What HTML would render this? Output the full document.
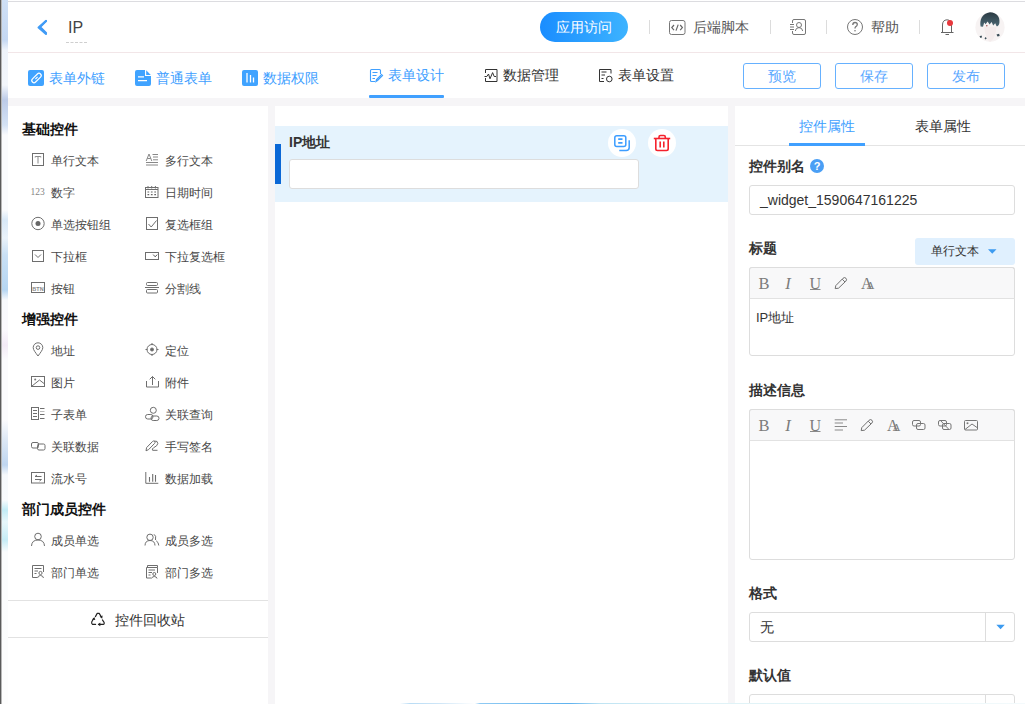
<!DOCTYPE html>
<html><head><meta charset="utf-8">
<style>
*{margin:0;padding:0;box-sizing:border-box}
html,body{width:1025px;height:704px;overflow:hidden;background:#f6f5f7;font-family:"Liberation Sans",sans-serif;color:#333}
.abs{position:absolute}
#edge{left:0;top:0;width:8px;height:704px;background:linear-gradient(#cfe0f6 0,#c5d8f2 40px,#eef3fa 50px,#f3f6fb 85px,#bccbe8 100px,#d4e2f5 125px,#fafbfd 135px,#fafbfd 210px,#d8e8f7 220px,#eaf2fa 238px,#c9e0f5 255px,#b6d6f2 290px,#f7f9fc 300px,#fbf9fd 330px,#f3eaf6 345px,#fbfbfd 360px,#fbfbfd 420px,#dde8f5 440px,#bfd6f0 465px,#f6f9fc 475px,#f9fbfd 500px,#c2ecf6 510px,#e8f7fb 522px,#c6ecf6 540px,#fafcfd 552px,#fdfdfd 704px);}
#edge0{left:0;top:0;width:1px;height:704px;background:#5a5a5a}
#edge1{left:1px;top:0;width:1px;height:704px;background:#b8b8b8}
#header{left:8px;top:0;width:1017px;height:53px;background:#fff;border-top:2px solid #fff}
#topline{left:8px;top:1px;width:1017px;height:1px;background:#dcdce0}
#hline{left:8px;top:52px;width:1017px;height:1px;background:#f2e6e8}
#tabs{left:8px;top:53px;width:1017px;height:45px;background:#fff}
.t{position:absolute;white-space:nowrap;line-height:1}
.blue{color:#40a0ff}
#left{left:8px;top:106px;width:260px;height:598px;background:#fff}
#canvas{left:275px;top:106px;width:453px;height:598px;background:#fff}
#right{left:735px;top:106px;width:290px;height:598px;background:#fff}
.sec{font-size:14px;font-weight:bold;color:#111}
.it{font-size:12px;color:#484848}
.lbl{font-size:14px;font-weight:bold;color:#333}
.box{position:absolute;border:1px solid #dddddd;border-radius:3px;background:#fff}
.btn{position:absolute;top:63px;width:78px;height:26px;border:1px solid #66b1ff;border-radius:3px;color:#5aa8ff;font-size:14px;text-align:center;line-height:24px}
.sep{position:absolute;top:20px;width:1px;height:14px;background:#dcdcdc}
.tb{position:absolute;left:749px;width:266px;height:32px;background:#f8f8f9;border:1px solid #dddddd;border-bottom:1px solid #e2e2e2;border-radius:3px 3px 0 0}
</style></head><body>
<div id="edge" class="abs"></div>
<div id="edge0" class="abs"></div>
<div id="edge1" class="abs"></div>
<div id="header" class="abs"></div>
<div id="topline" class="abs"></div>
<div id="hline" class="abs"></div>
<div id="tabs" class="abs"></div>
<div id="left" class="abs"></div>
<div id="canvas" class="abs"></div>
<div id="right" class="abs"></div>

<!-- HEADER -->
<svg class="abs" style="left:36px;top:19px" width="14" height="16" viewBox="0 0 14 16"><path d="M10 2 L4 8 L10 14" fill="none" stroke="#3d96f5" stroke-width="2.2" stroke-linecap="round" stroke-linejoin="round"/></svg>
<div class="t" style="left:68px;top:20px;font-size:16px;color:#444">IP</div>
<div class="abs" style="left:66px;top:42px;width:21px;border-top:1px dashed #cfcfcf"></div>

<div class="abs" style="left:540px;top:12px;width:88px;height:30px;border-radius:15px;background:linear-gradient(90deg,#1a8dff,#3db3ff);color:#fff;font-size:14px;text-align:center;line-height:30px">应用访问</div>
<div class="sep" style="left:649px"></div>
<div class="t" style="left:693px;top:20px;font-size:14px;color:#555">后端脚本</div>
<div class="sep" style="left:770px"></div>
<div class="sep" style="left:826px"></div>
<div class="t" style="left:871px;top:20px;font-size:14px;color:#555">帮助</div>
<div class="sep" style="left:919px"></div>

<!-- TABS -->
<div class="t blue" style="left:49px;top:71px;font-size:14px">表单外链</div>
<div class="t blue" style="left:156px;top:71px;font-size:14px">普通表单</div>
<div class="t blue" style="left:263px;top:71px;font-size:14px">数据权限</div>
<div class="t blue" style="left:388px;top:68px;font-size:14px">表单设计</div>
<div class="abs" style="left:369px;top:95px;width:75px;height:3px;background:#40a0ff;border-radius:1px"></div>
<div class="t" style="left:503px;top:68px;font-size:14px;color:#333">数据管理</div>
<div class="t" style="left:618px;top:68px;font-size:14px;color:#333">表单设置</div>
<div class="btn" style="left:743px">预览</div>
<div class="btn" style="left:835px">保存</div>
<div class="btn" style="left:927px">发布</div>

<!-- LEFT PANEL -->
<div class="t sec" style="left:22px;top:122px">基础控件</div>
<div class="t it" style="left:51px;top:155px">单行文本</div>
<div class="t it" style="left:165px;top:155px">多行文本</div>
<div class="t it" style="left:51px;top:187px">数字</div>
<div class="t it" style="left:165px;top:187px">日期时间</div>
<div class="t it" style="left:51px;top:219px">单选按钮组</div>
<div class="t it" style="left:165px;top:219px">复选框组</div>
<div class="t it" style="left:51px;top:251px">下拉框</div>
<div class="t it" style="left:165px;top:251px">下拉复选框</div>
<div class="t it" style="left:51px;top:283px">按钮</div>
<div class="t it" style="left:165px;top:283px">分割线</div>
<div class="t sec" style="left:22px;top:312px">增强控件</div>
<div class="t it" style="left:51px;top:345px">地址</div>
<div class="t it" style="left:165px;top:345px">定位</div>
<div class="t it" style="left:51px;top:377px">图片</div>
<div class="t it" style="left:165px;top:377px">附件</div>
<div class="t it" style="left:51px;top:409px">子表单</div>
<div class="t it" style="left:165px;top:409px">关联查询</div>
<div class="t it" style="left:51px;top:441px">关联数据</div>
<div class="t it" style="left:165px;top:441px">手写签名</div>
<div class="t it" style="left:51px;top:473px">流水号</div>
<div class="t it" style="left:165px;top:473px">数据加载</div>
<div class="t sec" style="left:22px;top:502px">部门成员控件</div>
<div class="t it" style="left:51px;top:535px">成员单选</div>
<div class="t it" style="left:165px;top:535px">成员多选</div>
<div class="t it" style="left:51px;top:567px">部门单选</div>
<div class="t it" style="left:165px;top:567px">部门多选</div>
<div class="abs" style="left:8px;top:600px;width:260px;height:1px;background:#e2e2e2"></div>
<div class="t" style="left:115px;top:613px;font-size:14px;color:#333">控件回收站</div>
<div class="abs" style="left:8px;top:637px;width:260px;height:1px;background:#e2e2e2"></div>

<!-- CANVAS -->
<div class="abs" style="left:275px;top:126px;width:453px;height:76px;background:#e5f3fd"></div>
<div class="abs" style="left:275px;top:144px;width:6px;height:40px;background:#0b68d6"></div>
<div class="t lbl" style="left:289px;top:135px">IP地址</div>
<div class="box" style="left:289px;top:159px;width:350px;height:30px"></div>
<div class="abs" style="left:608px;top:129px;width:28px;height:28px;border-radius:50%;background:#fff"></div>
<div class="abs" style="left:648px;top:129px;width:28px;height:28px;border-radius:50%;background:#fff"></div>

<!-- RIGHT PANEL -->
<div class="t blue" style="left:799px;top:119px;font-size:14px">控件属性</div>
<div class="t" style="left:915px;top:119px;font-size:14px;color:#333">表单属性</div>
<div class="abs" style="left:735px;top:145px;width:290px;height:1px;background:#e4e4e4"></div>
<div class="abs" style="left:789px;top:143px;width:76px;height:3px;background:#40a0ff"></div>
<div class="t lbl" style="left:749px;top:159px">控件别名</div>
<div class="abs" style="left:810px;top:159px;width:14px;height:14px;border-radius:50%;background:#4a9ff5;color:#fff;font-size:11px;font-weight:bold;text-align:center;line-height:14px">?</div>
<div class="box" style="left:749px;top:185px;width:266px;height:30px"></div>
<div class="t" style="left:760px;top:193px;font-size:14px;color:#333">_widget_1590647161225</div>
<div class="t lbl" style="left:749px;top:241px">标题</div>
<div class="abs" style="left:915px;top:238px;width:100px;height:27px;background:#e0f0fe;border-radius:3px"></div>
<div class="t" style="left:931px;top:245px;font-size:12px;color:#333">单行文本</div>
<div class="box" style="left:749px;top:267px;width:266px;height:89px"></div>
<div class="tb" style="top:267px"></div>
<div class="t" style="left:756px;top:311px;font-size:13px;color:#333">IP地址</div>
<div class="t lbl" style="left:749px;top:383px">描述信息</div>
<div class="box" style="left:749px;top:409px;width:266px;height:151px"></div>
<div class="tb" style="top:409px;height:32px"></div>
<div class="t lbl" style="left:749px;top:586px">格式</div>
<div class="box" style="left:749px;top:612px;width:266px;height:30px"></div>
<div class="abs" style="left:985px;top:613px;width:1px;height:28px;background:#dddddd"></div>
<div class="t" style="left:760px;top:620px;font-size:14px;color:#333">无</div>
<div class="t lbl" style="left:749px;top:668px">默认值</div>
<div class="box" style="left:749px;top:694px;width:266px;height:30px"></div>
<div class="abs" style="left:985px;top:695px;width:1px;height:28px;background:#dddddd"></div>

<svg class="abs" style="left:0;top:0" width="1025" height="704" viewBox="0 0 1025 704">
<g fill="none" stroke="#7a7a7a" stroke-width="1">
<!-- header icons -->
<rect x="669.5" y="20.5" width="15.5" height="14" rx="2" stroke="#777"/>
<path d="M674 25 L671.8 27.6 L674 30.2 M680.2 25 L682.4 27.6 L680.2 30.2 M678.2 24.6 L676 30.6" stroke="#666" stroke-width="1.2"/>
<path d="M792.5 23 V21 Q792.5 19.5 794 19.5 H804 Q805.5 19.5 805.5 21 V33 Q805.5 34.5 804 34.5 H794 Q792.5 34.5 792.5 33 V31" stroke="#777"/>
<path d="M790 24.5 H794 M790 27 H794 M790 29.5 H794" stroke="#777"/>
<circle cx="799" cy="25" r="2.5" stroke="#777"/>
<path d="M795.3 31 Q795.8 27.6 799 27.6 Q802.2 27.6 802.7 31" stroke="#777"/>
<circle cx="855" cy="27" r="7.5" stroke="#777"/>
<path d="M852.8 25 Q852.8 22.5 855 22.5 Q857.3 22.5 857.3 24.6 Q857.3 26 855.6 26.8 Q855 27.2 855 28.6" stroke="#777" stroke-width="1.3"/>
<circle cx="855" cy="30.8" r="0.8" fill="#777" stroke="none"/>
<path d="M941 32.5 H953.5 M942.5 32.5 V25 Q942.5 20 947 19.8 Q951.5 20 951.5 25 V32.5 M945.5 34.5 H949" stroke="#666"/>
<circle cx="950" cy="23" r="3" fill="#e8383d" stroke="none"/>
<!-- back arrow -->
<path d="M46 21 L38.5 27.5 L46 34" stroke="#409cf6" stroke-width="2" stroke-linecap="round" stroke-linejoin="round"/>
</g>
<!-- avatar -->
<defs><linearGradient id="hair" x1="0" y1="0" x2="0" y2="1"><stop offset="0" stop-color="#2a3a43"/><stop offset="1" stop-color="#4d6a76"/></linearGradient></defs>
<circle cx="990" cy="27.2" r="14.6" fill="#f7f3f3"/>
<path d="M984 27 Q986 40 990 42 Q995 40 996.5 27 Z" fill="#f4ecec"/>
<path d="M980.6 26.5 C979.5 20 982 13.3 990 12.3 C997 12.5 1000.2 17 999.4 23 C999 25.5 997.8 26.3 996.6 26.3 L995.2 23.2 L993.2 25.6 L991.6 22 L989.6 24.6 L987.6 21.6 L985.6 24.2 L984.2 22.6 L983 26.8 Z" fill="url(#hair)"/>
<circle cx="986.8" cy="25.7" r="0.8" fill="#a05050"/>
<path d="M979.5 36.3 l2 -0.8 l0.6 1.8 l-1.6 0.8 z M984.5 38.2 l1.3 -1.2 l0.9 1.6 l-1.2 1 z M996.5 34.6 l2.6 -0.8 l0.6 2.2 l-2.2 0.6 z" fill="#3a4c56"/>
<!-- tab icons -->
<rect x="28" y="70" width="16" height="16" rx="2" fill="#40a3ff"/>
<g transform="rotate(-45 36.5 78)" fill="none" stroke="#fff" stroke-width="1.2"><rect x="30.8" y="75.8" width="11.4" height="4.4" rx="2.2"/><path d="M35 78 H38"/></g>
<path d="M137 70 H145 V76 H151 V84 Q151 86 149 86 H137 Q135 86 135 84 V72 Q135 70 137 70 Z" fill="#40a3ff"/>
<path d="M146.2 70.3 L150.8 74.9 H146.2 Z" fill="#40a3ff"/>
<path d="M138 76.8 H144 M138 80.6 H147" stroke="#fff" stroke-width="1.2" fill="none"/>
<rect x="242" y="70" width="16" height="16" rx="2" fill="#40a3ff"/>
<path d="M247 73 V82.5 M250.5 75 V82.5 M253.5 77.5 V82.5" stroke="#fff" stroke-width="1.3" fill="none"/>
<g fill="none" stroke="#40a0ff" stroke-width="1.1">
<path d="M380.5 74 V70.5 Q380.5 69.5 379.5 69.5 H371.5 Q370.5 69.5 370.5 70.5 V80.5 Q370.5 81.5 371.5 81.5 H375"/>
<path d="M372.5 72.5 H377.5 M372.5 75.5 H376.5 M372.5 78.5 H375"/>
<path d="M376 81.5 L376.5 79.5 L381.5 74.5 L382.5 75.5 L377.5 80.5 Z" stroke-width="1.2"/>
</g>
<g fill="none" stroke="#333" stroke-width="1">
<path d="M485.5 73 V69.5 H497 V81.5 H485.5 V78"/>
<path d="M484.5 76.5 H486.8 L488.5 74 L490 78.8 L492.6 72.6 L494.2 76.5 H496"/>
<path d="M604 81.5 H599.5 V69.5 H611 V73.5"/>
<path d="M601.5 72 H606.5 M601.5 75 H605 M601.5 78.5 H603.5"/>
<circle cx="609.3" cy="79" r="2.8"/>
</g>
<!-- left panel icons -->
<g fill="none" stroke="#6e6e6e" stroke-width="1">
<rect x="32.5" y="153.5" width="11" height="12"/>
<path d="M35.2 157.5 V156.5 H40.8 V157.5 M38 156.5 V163.5" stroke="#8a8a8a"/>
<circle cx="38" cy="223.5" r="6.2"/>
<rect x="32.5" y="250.5" width="11" height="11"/>
<path d="M35 254.5 L38 257.5 L41 254.5"/>
<rect x="31.5" y="282.5" width="13" height="10"/>
<path d="M146.2 161 L149 154 L151.8 161 M147.3 158.5 H150.7 M152.5 154.5 H158 M153 157 H158 M153 159.8 H158 M146 162.5 H158 M146 165 H158" stroke="#888"/>
<rect x="145.5" y="187.5" width="12.5" height="10"/>
<path d="M145.5 189.5 H158 M148 186 V188.5 M151.7 186 V188.5 M155.4 186 V188.5"/>
<path d="M147.5 192 H149.2 M150.9 192 H152.6 M154.3 192 H156 M147.5 194.7 H149.2 M150.9 194.7 H152.6 M154.3 194.7 H156" stroke="#666" stroke-width="1.2"/>
<rect x="146.5" y="217.5" width="11" height="12"/>
<path d="M148.5 224 L151.2 227 L156.5 220.5"/>
<rect x="145.5" y="252.5" width="13" height="7"/>
<path d="M153.2 254.6 L155.2 256.8 L157.2 254.6" stroke="#555"/>
<rect x="146.5" y="282.5" width="11" height="3" rx="1"/>
<path d="M145 287.5 H159"/>
<rect x="146.5" y="289.5" width="11" height="3.5" rx="1"/>
<path d="M38 356 C35.5 352.5 33.2 350 33.2 347.6 A4.8 4.8 0 0 1 42.8 347.6 C42.8 350 40.5 352.5 38 356 Z"/>
<circle cx="38" cy="347.6" r="1.8"/>
<rect x="31.5" y="376.5" width="13" height="10"/>
<path d="M32 386 L39.5 380 L44 383.5"/>
<rect x="31.5" y="407.5" width="7" height="12"/>
<path d="M33 410.5 H37 M33 413.5 H37 M33 416.5 H37 M40 408.5 H44.5 M40 414.5 H44.5 M40 418.5 H44.5"/>
<path d="M40 411.5 H44.5" stroke="#bbb"/>
<rect x="31.5" y="442.5" width="7" height="5.5" rx="1.5"/>
<rect x="37.5" y="444" width="7.5" height="6" rx="1.5"/>
<rect x="31.5" y="472.5" width="13" height="10.5"/>
<path d="M35 476.5 H41.5 M35 476.5 L37 475 M35 479.5 H41.5 M41.5 479.5 L39.5 481"/>
<circle cx="152" cy="349.5" r="5"/>
<path d="M152 343 V345 M152 354 V356 M145.5 349.5 H147.5 M156.5 349.5 H158.5"/>
<circle cx="152" cy="349.5" r="1.5" fill="#666"/>
<path d="M146.5 381 V387 H158.5 V381 M152.5 385 V376.5 M149.7 379.3 L152.5 376.5 L155.3 379.3"/>
<circle cx="153.3" cy="410.3" r="3"/>
<rect x="145.5" y="414.5" width="7.5" height="4.5" rx="2.2"/>
<rect x="151" y="416" width="8" height="4.5" rx="2.2"/>
<path d="M146 450.8 L146.6 447.6 L152.6 441.4 Q153.6 440.5 154.6 441.4 Q155.6 442.4 154.6 443.4 L148.6 449.6 Z M154.2 441 Q158 440.6 157.8 443.6 Q157.4 446 153.5 447.8 Q151.6 449 152.6 450.3 H157.5"/>
<path d="M145.8 472 V483.3 H158.3"/><path d="M149.5 477 V481.8 M152.7 474 V481.8 M155.5 475 V481.8" stroke-width="1.1"/>
<circle cx="38" cy="536.5" r="3.3"/>
<path d="M31.5 546 Q31.8 540 38 540 Q44.2 540 44.5 546"/>
<path d="M43.5 565.5 H32.5 V577.5 H37 M43.5 565.5 V572 M34.5 568.5 H41.5 M34.5 571 H38 M34.5 573.5 H36.5"/>
<circle cx="40.5" cy="573" r="1.6"/>
<path d="M37.5 578 Q38 575.5 40.5 575.5 Q43 575.5 43.5 578"/>
<circle cx="150" cy="537.3" r="3.2"/>
<path d="M145 545.5 Q145.2 540.5 150 540.5 Q154.8 540.5 155 545.5 M154 534.3 Q156.5 535.5 155.5 540 M156.2 540.8 Q158.5 542 158.8 545.5"/>
<path d="M147.5 567.5 V565.5 H157.5 V567.5 M146.5 567.5 V578 H151 M146.5 567.5 H157.5 V573 M148.5 570 H155 M148.5 572.5 H152 M148.5 575 H150.5"/>
<circle cx="154.3" cy="574" r="1.5"/>
<path d="M151.5 578.5 Q152 576.5 154.3 576.5 Q156.6 576.5 157 578.5"/>
</g>
<circle cx="38" cy="223.5" r="2.5" fill="#666"/>
<text x="38" y="290.6" font-family="Liberation Sans" font-size="5.5" font-weight="bold" fill="#888" text-anchor="middle">BTN</text>
<text x="30.5" y="195" font-family="Liberation Serif" font-size="9.5" fill="#858585">123</text>
<circle cx="35.2" cy="379.5" r="1" fill="#777"/>
<!-- recycle -->
<g fill="none" stroke="#222" stroke-width="1.15" stroke-linejoin="round" stroke-linecap="round">
<path d="M95.4 616.6 L97.2 613.4 H99.2 L101 616.4"/>
<path d="M93.6 618.6 L91.8 621.8 Q91.2 623.4 92.4 624.4 H95.6"/>
<path d="M98.6 624.4 H103.2 Q104.6 624.2 104.1 622.4 L102.4 619.9"/>
</g>
<g fill="#222">
<path d="M99.6 616.8 L102.6 615.6 L102.2 618.8 Z"/>
<path d="M92.2 619.6 L94.4 616.9 L95.3 620 Z"/>
<path d="M97.7 624.4 L100.3 622.5 V626.3 Z"/>
</g>
<!-- canvas action icons -->
<g fill="none" stroke="#3d9dff" stroke-width="1.5">
<rect x="614.8" y="135.8" width="11" height="10.7" rx="2"/>
<path d="M618.2 139.2 H622.5 M618.2 142.8 H622.5" stroke-width="1.8"/>
<path d="M629.2 140.2 V147.6 Q629.2 150.6 626.2 150.6 H619.3"/>
</g>
<g fill="none" stroke="#f5222d" stroke-width="1.6">
<path d="M653.8 138.5 H670.2"/>
<path d="M659 138.3 V137 Q659 135.5 660.5 135.5 H663.8 Q665.3 135.5 665.3 137 V138.3"/>
<path d="M655.8 139 V148.8 Q655.8 150.5 657.5 150.5 H666.5 Q668.2 150.5 668.2 148.8 V139"/>
<path d="M660.2 141.5 V147.5 M663.8 141.5 V147.5"/>
</g>
<!-- right panel -->
<path d="M988 249.3 H996.5 L992.25 253.8 Z" fill="#3d9bf0"/>
<path d="M996.3 624.8 H1004.8 L1000.55 629.2 Z" fill="#3d9bf0"/>
</svg>
<svg class="abs" style="left:0;top:0" width="1025" height="704"><g transform="translate(0,0)"><text x="758.4" y="289" font-family="Liberation Serif" font-size="16.5" fill="#7c7c7c">B</text><text x="785.2" y="289" font-family="Liberation Serif" font-size="16.5" font-style="italic" fill="#7c7c7c">I</text><text x="809.5" y="288.6" font-family="Liberation Serif" font-size="16" fill="#7c7c7c">U</text><path d="M810 289.5 H820.5" stroke="#8a8a8a" stroke-width="1"/><g transform="translate(0,0)"><path d="M835.2 288.6 L835.8 285.6 L843 278.3 Q844.5 276.8 846 278.3 Q847.3 279.7 845.8 281.2 L838.5 288.2 Z M842.2 279.2 L845 282" fill="none" stroke="#707070" stroke-width="1"/></g><text x="861" y="288.8" font-family="Liberation Serif" font-size="16" fill="#7a7a7a">A</text><text x="866.5" y="288.8" font-family="Liberation Serif" font-size="11" fill="#7a7a7a">A</text></g><g transform="translate(0,142)"><text x="758.4" y="289" font-family="Liberation Serif" font-size="16.5" fill="#7c7c7c">B</text><text x="785.2" y="289" font-family="Liberation Serif" font-size="16.5" font-style="italic" fill="#7c7c7c">I</text><text x="809.5" y="288.6" font-family="Liberation Serif" font-size="16" fill="#7c7c7c">U</text><path d="M810 289.5 H820.5" stroke="#8a8a8a" stroke-width="1"/><path d="M834.7 277.8 H847 M834.7 281 H843 M834.7 284.5 H847 M834.7 288 H843" stroke="#8a8a8a" stroke-width="1"/><g transform="translate(26,0)"><path d="M835.2 288.6 L835.8 285.6 L843 278.3 Q844.5 276.8 846 278.3 Q847.3 279.7 845.8 281.2 L838.5 288.2 Z M842.2 279.2 L845 282" fill="none" stroke="#707070" stroke-width="1"/></g><text x="887" y="288.8" font-family="Liberation Serif" font-size="16" fill="#7a7a7a">A</text><text x="892.5" y="288.8" font-family="Liberation Serif" font-size="11" fill="#7a7a7a">A</text><g fill="none" stroke="#777" stroke-width="1"><rect x="912.5" y="278.5" width="8" height="5.5" rx="1.5"/><rect x="916.5" y="281.5" width="8.5" height="6" rx="1.5"/><rect x="938.5" y="278.5" width="8" height="5.5" rx="1.5"/><rect x="942.5" y="281.5" width="8.5" height="6" rx="1.5"/><path d="M940 278 L949 287.5"/><rect x="964.5" y="278.5" width="13" height="9.5" rx="1"/><path d="M965 287.5 L972 282 L977 285.5"/></g><circle cx="967.5" cy="281.3" r="1" fill="#777"/></g></svg>
<div class="abs" style="left:400px;top:703px;width:625px;height:1px;background:linear-gradient(90deg,#fff 0,#b9dcf5 10px,#cfe6f7 40px,#fff 75px,#8fcaf3 80px,#5fb2ef 170px,#bfe4f3 200px,#dff2f7 300px,#e6f6f8 500px,#f4fafc 625px)"></div>
</body></html>
